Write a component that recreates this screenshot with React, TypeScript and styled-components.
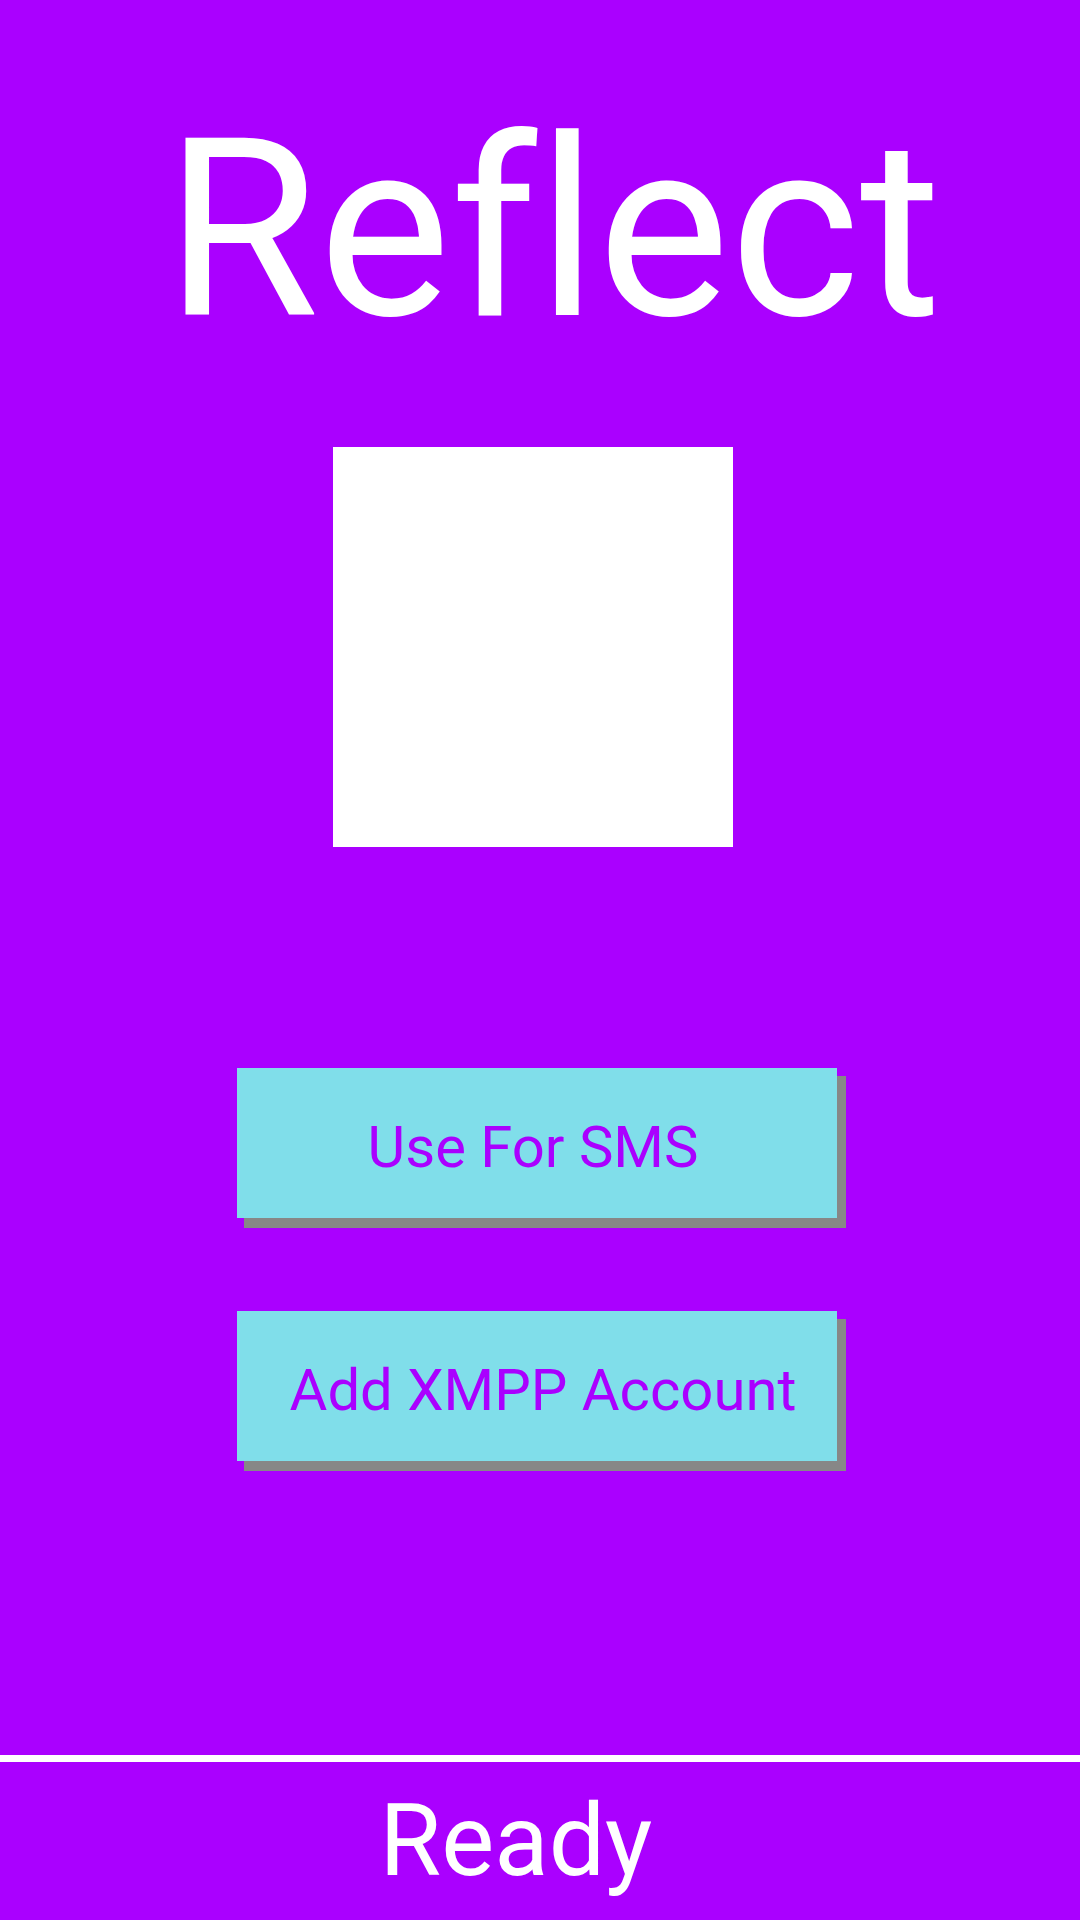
import React from "react";
import styled, { createGlobalStyle } from "styled-components";

const Global = createGlobalStyle`
  html, body {
    margin: 0;
    padding: 0;
    background: #aa00ff;
  }
  body {
    font-family: Roboto, "Noto Sans", sans-serif;
    font-variant-ligatures: none;
  }
`;

const Screen = styled.div`
  width: 1080px;
  height: 1920px;
  background: #aa00ff;
  display: flex;
  flex-direction: column;
  overflow: hidden;
`;

const Main = styled.main`
  flex: 1;
  display: flex;
  flex-direction: column;
  align-items: flex-start;
`;

const Title = styled.h1`
  margin: 106px 0 0 165px;
  font-family: Roboto, sans-serif;
  font-weight: 400;
  font-size: 249px;
  line-height: 249px;
  color: #ffffff;
  white-space: nowrap;
  font-variant-ligatures: none;
  font-feature-settings: "liga" 0, "clig" 0;
`;

const Picture = styled.div`
  margin: 92px 0 0 333px;
  width: 400px;
  height: 400px;
  background: #ffffff;
`;

const ActionButton = styled.button<{ $gap: number; $nudge: number }>`
  margin: ${(p) => p.$gap}px 0 0 237px;
  width: 600px;
  height: 150px;
  padding: 8px ${(p) => (p.$nudge < 0 ? -2 * p.$nudge : 0)}px 0
    ${(p) => (p.$nudge > 0 ? 2 * p.$nudge : 0)}px;
  border: none;
  border-radius: 0;
  background: #80deea;
  box-shadow: 8px 9px 0 1px #878787;
  color: #aa00ff;
  font-family: Roboto, sans-serif;
  font-size: 58px;
  font-weight: 400;
  line-height: 58px;
  display: flex;
  align-items: center;
  justify-content: center;
  white-space: nowrap;
`;

const Footer = styled.footer`
  height: 165px;
  border-top: 7px solid #ffffff;
  display: flex;
  justify-content: center;
  box-sizing: border-box;
`;

const Status = styled.div`
  margin: 29px 48px 0 0;
  font-family: Roboto, sans-serif;
  font-size: 100px;
  line-height: 100px;
  color: #ffffff;
`;

export default function App() {
  return (
    <>
      <Global />
      <Screen>
        <Main>
          <Title>Reflect</Title>
          <Picture />
          <ActionButton $gap={221} $nudge={-4}>
            Use For SMS
          </ActionButton>
          <ActionButton $gap={93} $nudge={6}>
            Add XMPP Account
          </ActionButton>
        </Main>
        <Footer>
          <Status>Ready</Status>
        </Footer>
      </Screen>
    </>
  );
}
